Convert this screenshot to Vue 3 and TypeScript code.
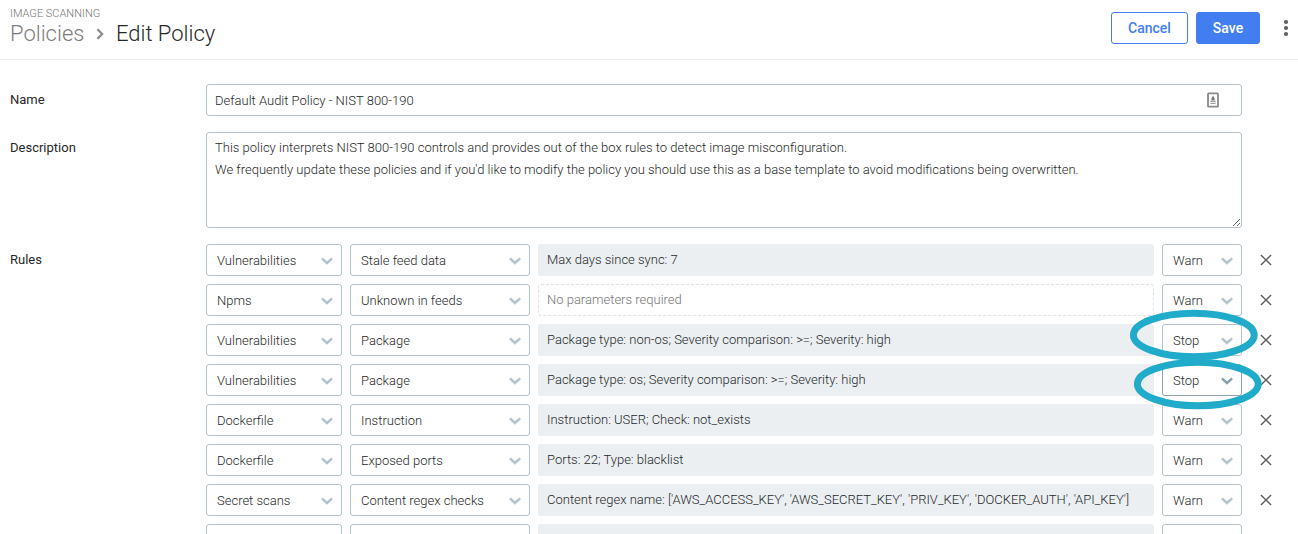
<script setup lang="ts">
import { ref } from 'vue'

interface Rule {
  gate: string
  trigger: string
  params: string
  action: 'Warn' | 'Stop'
  active?: boolean
}

const name = ref('Default Audit Policy - NIST 800-190')
const description = ref(
  "This policy interprets NIST 800-190 controls and provides out of the box rules to detect image misconfiguration.\n" +
  "We frequently update these policies and if you'd like to modify the policy you should use this as a base template to avoid modifications being overwritten."
)

const rules = ref<Rule[]>([
  { gate: 'Vulnerabilities', trigger: 'Stale feed data', params: 'Max days since sync: 7', action: 'Warn' },
  { gate: 'Npms', trigger: 'Unknown in feeds', params: '', action: 'Warn' },
  { gate: 'Vulnerabilities', trigger: 'Package', params: 'Package type: non-os; Severity comparison: >=; Severity: high', action: 'Stop' },
  { gate: 'Vulnerabilities', trigger: 'Package', params: 'Package type: os; Severity comparison: >=; Severity: high', action: 'Stop', active: true },
  { gate: 'Dockerfile', trigger: 'Instruction', params: 'Instruction: USER; Check: not_exists', action: 'Warn' },
  { gate: 'Dockerfile', trigger: 'Exposed ports', params: 'Ports: 22; Type: blacklist', action: 'Warn' },
  { gate: 'Secret scans', trigger: 'Content regex checks', params: "Content regex name: ['AWS_ACCESS_KEY', 'AWS_SECRET_KEY', 'PRIV_KEY', 'DOCKER_AUTH', 'API_KEY']", action: 'Warn' },
])
</script>

<template>
  <div class="page">
    <header class="header">
      <div class="titles">
        <div class="section">IMAGE SCANNING</div>
        <div class="crumbs">
          <span class="parent">Policies</span>
          <svg class="sep" width="8" height="12" viewBox="0 0 8 12"><path d="M1.4 1.2 6.2 6 1.4 10.8" /></svg>
          <span>Edit Policy</span>
        </div>
      </div>
      <div class="actions">
        <button class="btn">Cancel</button>
        <button class="btn primary">Save</button>
        <svg class="more" width="6" height="18" viewBox="0 0 6 18">
          <circle cx="3" cy="3" r="2.1" /><circle cx="3" cy="9" r="2.1" /><circle cx="3" cy="15" r="2.1" />
        </svg>
      </div>
    </header>

    <main class="form">
      <div class="field">
        <label class="label">Name</label>
        <div class="name-box">
          <input v-model="name" class="name-input" />
          <svg class="autofill" width="12" height="16" viewBox="0 0 12 16">
            <rect x="1" y="1.3" width="10" height="13.4" rx="0.6" fill="none" stroke="#8a8a8a" stroke-width="1.8" />
            <path d="M6 3.4 7.5 6.6V8.2H4.5V6.6Z" fill="#777" />
            <path d="M3.4 9.3H8.6M3.4 11.4H8.6" stroke="#a0a0a0" stroke-width="1.4" />
          </svg>
        </div>
      </div>

      <div class="field">
        <label class="label">Description</label>
        <textarea v-model="description" class="description" spellcheck="false"></textarea>
      </div>

      <div class="field">
        <label class="label">Rules</label>
        <div class="rules">
          <div v-for="(rule, i) in rules" :key="i" class="rule">
            <div class="select">
              <span>{{ rule.gate }}</span>
              <svg class="chevron" width="14" height="8" viewBox="0 0 14 8"><path d="M1.9 1.3 7 6 12.1 1.3" /></svg>
            </div>
            <div class="select">
              <span>{{ rule.trigger }}</span>
              <svg class="chevron" width="14" height="8" viewBox="0 0 14 8"><path d="M1.9 1.3 7 6 12.1 1.3" /></svg>
            </div>
            <div class="params" :class="{ empty: !rule.params }">{{ rule.params || 'No parameters required' }}</div>
            <div class="select" :class="{ active: rule.active }">
              <span>{{ rule.action }}</span>
              <svg class="chevron" width="14" height="8" viewBox="0 0 14 8"><path d="M1.9 1.3 7 6 12.1 1.3" /></svg>
            </div>
            <svg class="remove" width="12" height="12" viewBox="0 0 12 12"><path d="M.9.9 11.1 11.1M11.1.9.9 11.1" /></svg>
          </div>
          <div class="rule">
            <div class="select"></div>
            <div class="select"></div>
            <div class="params"></div>
            <div class="select"></div>
          </div>
        </div>
      </div>
    </main>

    <svg class="marks" width="136" height="104" viewBox="0 0 136 104">
      <ellipse cx="67.8" cy="29" rx="60.4" ry="21.8" />
      <ellipse cx="71.8" cy="78" rx="60.4" ry="21.8" />
    </svg>
  </div>
</template>

<style>
body {
  margin: 0;
  overflow: hidden;
}
</style>

<style scoped>
.page {
  position: relative;
  height: 534px;
  overflow: hidden;
  background: #fff;
  color: #252828;
  font-family: Roboto, "Liberation Sans", sans-serif;
  font-size: 13px;
  font-weight: 300;
}
.header {
  box-sizing: border-box;
  height: 60px;
  display: flex;
  justify-content: space-between;
  padding: 7px 9px 0 10px;
  border-bottom: 1px solid #e9e9e9;
}
.section {
  font-size: 11px;
  line-height: 13px;
  color: #757575;
}
.crumbs {
  display: flex;
  align-items: center;
  font-size: 22px;
  line-height: 27px;
}
.parent { color: #7c7c7c; }
.sep { margin: 1px 11.5px 0 12px; }
.sep path { fill: none; stroke: #8a8a8a; stroke-width: 2.2; }
.actions {
  display: flex;
  align-items: flex-start;
  gap: 8px;
  padding-top: 5px;
}
.btn {
  box-sizing: border-box;
  width: 77px;
  height: 32px;
  padding: 0;
  border: 1px solid #427ef0;
  border-radius: 3px;
  background: #fff;
  color: #427ef0;
  font: 500 14px Roboto, sans-serif;
}
.primary {
  width: 64px;
  background: #427ef0;
  color: #fff;
}
.more { margin: 7px 0 0 15px; fill: #606060; }
.form {
  display: flex;
  flex-direction: column;
  gap: 16px;
  padding: 24px 0 0 10px;
}
.field { display: flex; }
.label {
  width: 196px;
  flex: none;
  line-height: 31px;
  font-weight: 400;
}
.name-box, .description, .select {
  box-sizing: border-box;
  border: 1px solid #b3c3ce;
  border-radius: 3px;
  background: #fff;
}
.name-box {
  display: flex;
  align-items: center;
  width: 1036px;
  height: 32px;
  padding: 0 22px 0 8px;
}
.name-input {
  flex: 1;
  padding: 0;
  border: 0;
  outline: 0;
  font: inherit;
  color: inherit;
}
.description {
  display: block;
  width: 1036px;
  height: 96px;
  margin: 0;
  padding: 4px 8px;
  outline: 0;
  font: inherit;
  line-height: 22px;
  color: inherit;
}
.rules {
  display: flex;
  flex-direction: column;
  gap: 8px;
}
.rule {
  display: grid;
  grid-template-columns: 136px 180px 616px 80px 12px;
  column-gap: 8px;
  align-items: center;
  height: 32px;
}
.select {
  display: flex;
  align-items: center;
  justify-content: space-between;
  height: 32px;
  padding: 1px 7px 0 10px;
}
.chevron path {
  fill: none;
  stroke: #b3c3ce;
  stroke-width: 2.4;
}
.active { border-color: #8fa3b1; }
.active .chevron path { stroke: #8a9fad; }
.params {
  box-sizing: border-box;
  height: 32px;
  padding: 0 9px;
  border-radius: 3px;
  background: #ebeff2;
  line-height: 31px;
  white-space: nowrap;
}
.empty {
  padding: 0 8px;
  border: 1px dashed #dfe2e4;
  background: #fff;
  color: #757575;
  line-height: 29px;
}
.remove { margin-left: 10px; }
.remove path { stroke: #5c5c5c; stroke-width: 1.4; }
.marks {
  position: absolute;
  left: 1126px;
  top: 306px;
  pointer-events: none;
}
.marks ellipse { fill: none; stroke: #21abca; stroke-width: 7; }
</style>
